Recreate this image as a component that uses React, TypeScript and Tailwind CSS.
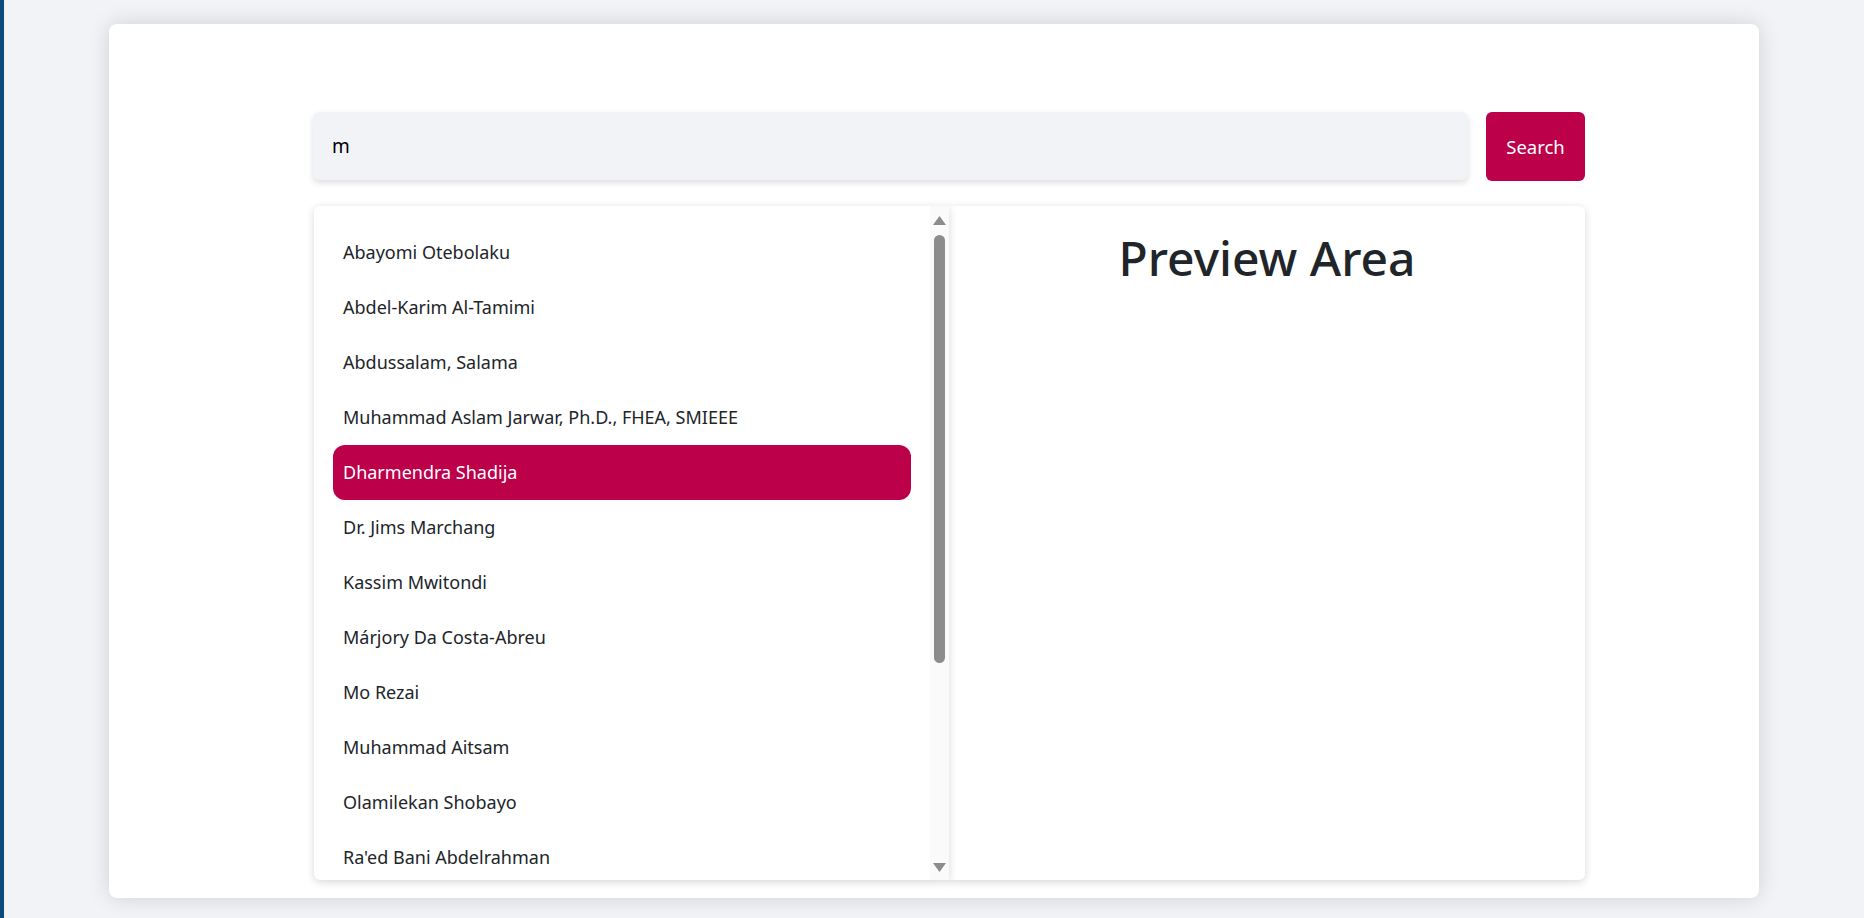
import React from "react";

const names = [
  "Abayomi Otebolaku",
  "Abdel-Karim Al-Tamimi",
  "Abdussalam, Salama",
  "Muhammad Aslam Jarwar, Ph.D., FHEA, SMIEEE",
  "Dharmendra Shadija",
  "Dr. Jims Marchang",
  "Kassim Mwitondi",
  "Márjory Da Costa-Abreu",
  "Mo Rezai",
  "Muhammad Aitsam",
  "Olamilekan Shobayo",
  "Ra'ed Bani Abdelrahman",
];

export default function App() {
  return (
    <div
      className="min-h-screen bg-[#f1f3f7] border-l-4 border-[#0b4a7e] pt-6 pb-5 px-[105px]"
      style={{ fontFamily: '"Noto Sans", "Open Sans", sans-serif' }}
    >
      <div className="bg-white rounded-lg shadow-[0_0_22px_rgba(0,0,0,0.14)] h-[874px] pt-[88px] pl-[204px] pr-[174px]">
        <div className="flex gap-[18px] h-[68px]">
          <div className="flex-1 bg-[#f2f3f7] rounded-md shadow-[0_3px_6px_rgba(0,0,0,0.13)] pl-[19px] flex items-center text-[19px] text-black">
            m
          </div>
          <button className="w-[99px] h-[69px] bg-[#bc0049] rounded-md text-white text-[18.5px]">
            Search
          </button>
        </div>
        <div className="mt-[26px] flex h-[674px]">
          <div className="relative z-10 w-[635px] ml-px bg-white rounded-l-md shadow-[0_2px_8px_rgba(0,0,0,0.16)] flex overflow-hidden">
            <div className="flex-1 overflow-hidden pt-[19px] pl-[19px] pr-[19px]">
              {names.map((n, i) => (
                <div
                  key={n}
                  className={
                    i === 4
                      ? "h-[55px] flex items-center pl-[10px] rounded-xl bg-[#bc0049] text-white text-[18px]"
                      : "h-[55px] flex items-center pl-[10px] rounded-xl text-[#212529] text-[18px]"
                  }
                >
                  {n}
                </div>
              ))}
            </div>
            <div className="w-[19px] bg-[#fafafa] flex flex-col items-center pt-[10px] pb-[8px]">
              <svg width="13" height="9" viewBox="0 0 13 9">
                <polygon points="6.5,0 13,9 0,9" fill="#8c8c8c" />
              </svg>
              <div className="mt-[10px] w-[11px] h-[428px] rounded-full bg-[#8c8c8c]" />
              <div className="flex-1" />
              <svg width="13" height="9" viewBox="0 0 13 9">
                <polygon points="0,0 13,0 6.5,9" fill="#8c8c8c" />
              </svg>
            </div>
          </div>
          <div className="flex-1 bg-white rounded-r-md shadow-[0_2px_8px_rgba(0,0,0,0.16)] pt-[23px]">
            <h1 className="text-center text-[48px] leading-[1.2] font-medium text-[#212529]">
              Preview Area
            </h1>
          </div>
        </div>
      </div>
    </div>
  );
}
